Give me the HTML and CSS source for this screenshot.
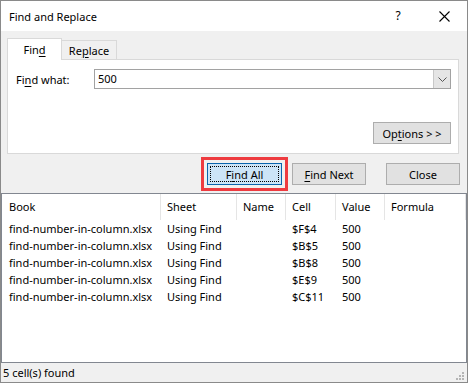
FILE: index.html
```html
<!DOCTYPE html>
<html>
<head>
<meta charset="utf-8">
<link rel="stylesheet" href="styles.css">
</head>
<body>
<div class="dialog">
  <div class="titlebar">
    <span class="title">Find and Replace</span>
    <span class="cap help">?</span>
    <span class="cap close-x"><svg width="11" height="11" viewBox="0 0 11 11"><path d="M0.5 0.5L10.5 10.5M10.5 0.5L0.5 10.5" stroke="#000" stroke-width="1.1" fill="none"/></svg></span>
  </div>
  <div class="top">
    <div class="tabs">
      <div class="tab active">Fin<u>d</u></div>
      <div class="tab">Re<u>p</u>lace</div>
    </div>
    <div class="panel">
      <div class="find-row">
        <span class="label">Fi<u>n</u>d what:</span>
        <div class="combo">
          <span class="combo-value">500</span>
          <span class="drop"><svg width="9" height="5" viewBox="0 0 9 5"><path d="M0.5 0.5L4.5 4.5L8.5 0.5" stroke="#555" stroke-width="1" fill="none"/></svg></span>
        </div>
      </div>
      <button class="btn options">Op<u>t</u>ions &gt; &gt;</button>
    </div>
  </div>
  <div class="actions">
    <div class="callout"><button class="btn primary"><span class="focus">F<u>i</u>nd All</span></button></div>
    <button class="btn"><u>F</u>ind Next</button>
    <button class="btn close">Close</button>
  </div>
  <div class="results">
    <div class="grid head">
      <div class="c first sep">Book</div>
      <div class="c sep">Sheet</div>
      <div class="c sep">Name</div>
      <div class="c sep">Cell</div>
      <div class="c sep">Value</div>
      <div class="c sep">Formula</div>
    </div>
    <div class="grid row"><div class="c first">find-number-in-column.xlsx</div><div class="c">Using Find</div><div class="c"></div><div class="c">$F$4</div><div class="c">500</div><div class="c"></div></div>
    <div class="grid row"><div class="c first">find-number-in-column.xlsx</div><div class="c">Using Find</div><div class="c"></div><div class="c">$B$5</div><div class="c">500</div><div class="c"></div></div>
    <div class="grid row"><div class="c first">find-number-in-column.xlsx</div><div class="c">Using Find</div><div class="c"></div><div class="c">$B$8</div><div class="c">500</div><div class="c"></div></div>
    <div class="grid row"><div class="c first">find-number-in-column.xlsx</div><div class="c">Using Find</div><div class="c"></div><div class="c">$E$9</div><div class="c">500</div><div class="c"></div></div>
    <div class="grid row"><div class="c first">find-number-in-column.xlsx</div><div class="c">Using Find</div><div class="c"></div><div class="c">$C$11</div><div class="c">500</div><div class="c"></div></div>
  </div>
  <div class="status">
    <span>5 cell(s) found</span>
    <svg class="grip" width="9" height="9" viewBox="0 0 9 9" fill="#b4b4b4">
      <rect x="6" y="0" width="2" height="2"/>
      <rect x="3" y="3" width="2" height="2"/><rect x="6" y="3" width="2" height="2"/>
      <rect x="0" y="6" width="2" height="2"/><rect x="3" y="6" width="2" height="2"/><rect x="6" y="6" width="2" height="2"/>
    </svg>
  </div>
</div>
</body>
</html>
```

FILE: styles.css
```css
* { box-sizing: border-box; }
html, body { margin: 0; padding: 0; background: #fff; }
body {
  font-family: "Noto Sans", "Segoe UI", sans-serif;
  font-size: 11px;
  color: #000;
}
u { text-decoration-thickness: 1px; text-underline-offset: 2px; }

.dialog {
  width: 468px;
  height: 383px;
  border: 1px solid #8a8a8a;
  background: #f0f0f0;
  display: flex;
  flex-direction: column;
}

.titlebar {
  height: 30px;
  background: #fff;
  display: flex;
  align-items: center;
  padding-left: 8px;
  flex: none;
}
.title { flex: 1; }
.cap {
  width: 46px;
  height: 30px;
  display: flex;
  align-items: center;
  justify-content: center;
}
.help { font-size: 12px; padding-bottom: 2px; }

.top {
  padding: 7px 8px 0 6px;
  flex: none;
}
.tabs {
  display: flex;
  align-items: flex-end;
  height: 21px;
  position: relative;
  z-index: 1;
}
.tab {
  height: 19px;
  width: 55px;
  border: 1px solid #d9d9d9;
  border-bottom: none;
  border-left: none;
  background: #f0f0f0;
  display: flex;
  align-items: center;
  justify-content: center;
  padding-top: 1px;
}
.tab.active {
  height: 22px;
  margin-bottom: -1px;
  width: 55px;
  background: #fff;
  border-left: 1px solid #d9d9d9;
  padding-top: 0;
}
.panel {
  height: 95px;
  background: #fff;
  border: 1px solid #d9d9d9;
  padding: 9px 7px 9px 8px;
  display: flex;
  flex-direction: column;
  align-items: stretch;
}
.find-row {
  display: flex;
  align-items: center;
}
.label { width: 78px; flex: none; }
.combo {
  flex: 1;
  height: 20px;
  border: 1px solid #a2a2a2;
  display: flex;
  align-items: stretch;
  background: #fff;
}
.combo-value { flex: 1; padding-left: 3px; line-height: 18px; }
.drop {
  width: 17px;
  background: #e5e5e5;
  border-left: 1px solid #c8c8c8;
  display: flex;
  align-items: center;
  justify-content: center;
}

.btn {
  font: inherit;
  color: #000;
  height: 22px;
  width: 74px;
  background: #e1e1e1;
  border: 1px solid #adadad;
  padding: 0;
  display: flex;
  align-items: center;
  justify-content: center;
}
.options {
  margin-top: auto;
  align-self: flex-end;
  width: 78px;
}

.actions {
  flex: none;
  height: 39px;
  display: flex;
  justify-content: flex-end;
  align-items: flex-start;
  padding: 9px 7px 0 0;
  gap: 10px;
}
.actions .close { margin-left: 10px; }
.callout {
  outline: 3px solid #ee3b40;
  outline-offset: 3px;
  display: flex;
}
.btn.primary {
  width: 75px;
  background: #cce4f7;
  border: 1px solid #0a64ad;
  padding: 2px;
}
.focus {
  flex: 1;
  align-self: stretch;
  border: 1px dotted #000;
  display: flex;
  align-items: center;
  justify-content: center;
}

.results {
  flex: none;
  height: 170px;
  background: #fff;
  border: 1px solid #828790;
}
.grid {
  display: grid;
  grid-template-columns: 159px 76px 49px 50px 49px 1fr;
}
.head { height: 26px; }
.head .c { line-height: 26px; }
.row { height: 17px; }
.row .c { line-height: 17px; }
.c {
  padding-left: 6px;
  white-space: nowrap;
}
.c.first { padding-left: 7px; }
.sep { border-right: 1px solid #e5e5e5; }

.status {
  flex: 1;
  display: flex;
  align-items: center;
  justify-content: space-between;
  padding-left: 2px;
  position: relative;
}
.grip { position: absolute; right: 2px; bottom: 1px; }
```
